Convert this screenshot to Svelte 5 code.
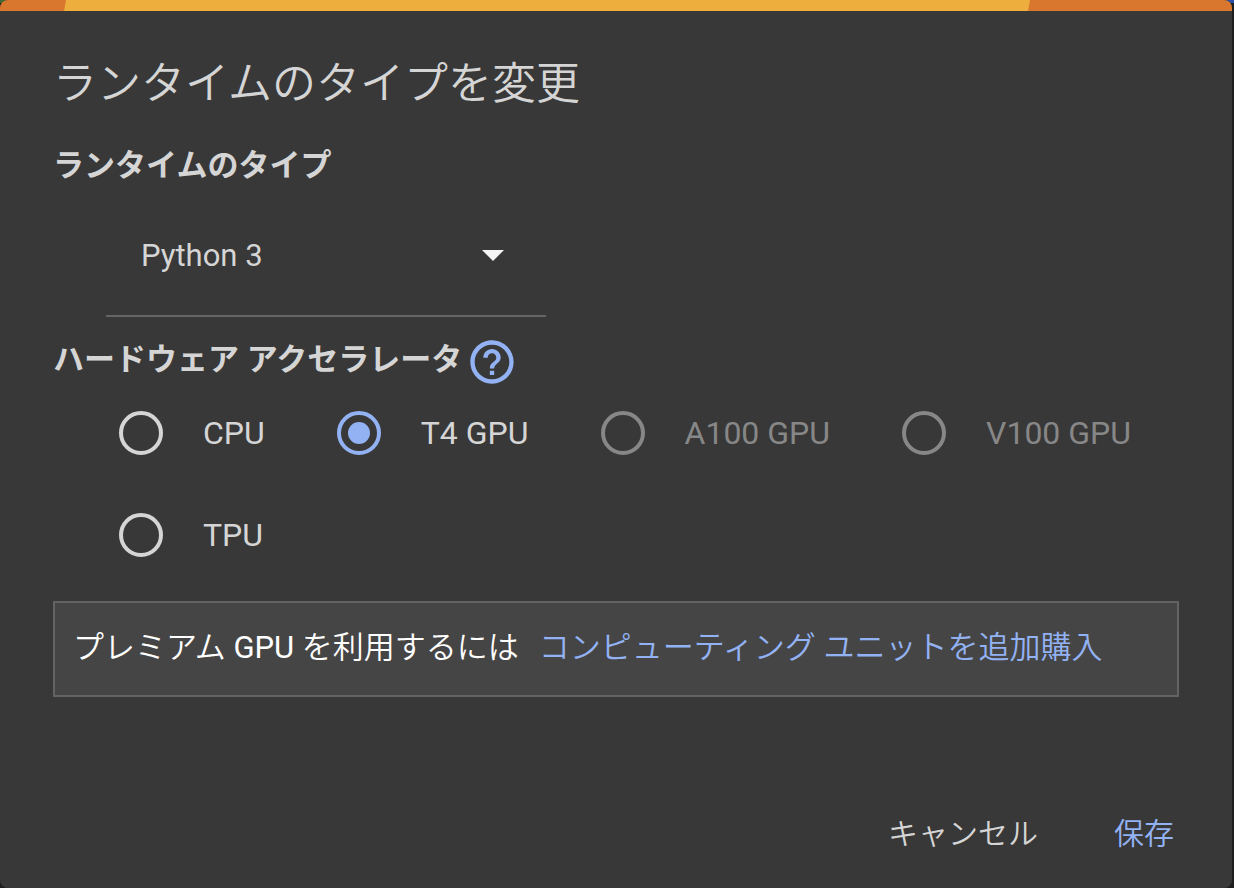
<script lang="ts">
  type Accelerator = { value: string; label: string; disabled?: boolean }

  const accelerators: Accelerator[] = [
    { value: 'cpu', label: 'CPU' },
    { value: 't4', label: 'T4 GPU' },
    { value: 'a100', label: 'A100 GPU', disabled: true },
    { value: 'v100', label: 'V100 GPU', disabled: true },
    { value: 'tpu', label: 'TPU' },
  ]

  let runtime = $state('python3')
  let accelerator = $state('t4')
</script>

<div class="backdrop">
  <form class="dialog" aria-labelledby="dialog-title" onsubmit={(e) => e.preventDefault()}>
    <div class="stripe"><div class="stripe-inner"></div></div>
    <div class="body">
      <h2 id="dialog-title">ランタイムのタイプを変更</h2>

      <label class="section-title" for="runtime">ランタイムのタイプ</label>
      <div class="select-wrapper">
        <select id="runtime" bind:value={runtime}>
          <option value="python3">Python 3</option>
          <option value="r">R</option>
        </select>
        <svg class="arrow" viewBox="0 0 22 11" aria-hidden="true">
          <path d="M0 0h22L11 11z" />
        </svg>
      </div>

      <div class="section-row">
        <span class="section-title" id="accelerator-title">ハードウェア アクセラレータ</span>
        <a class="help" href="#help" aria-label="ヘルプ">
          <svg viewBox="0 0 24 24" aria-hidden="true">
            <path
              d="M11 18h2v-2h-2v2zm1-16C6.48 2 2 6.48 2 12s4.48 10 10 10 10-4.48 10-10S17.52 2 12 2zm0 18c-4.41 0-8-3.59-8-8s3.59-8 8-8 8 3.59 8 8-3.59 8-8 8zm0-14c-2.21 0-4 1.79-4 4h2c0-1.1.9-2 2-2s2 .9 2 2c0 2-3 1.75-3 5h2c0-2.25 3-2.5 3-5 0-2.21-1.79-4-4-4z"
            />
          </svg>
        </a>
      </div>

      <div class="radios" role="radiogroup" aria-labelledby="accelerator-title">
        {#each accelerators as item (item.value)}
          <label class="radio" class:disabled={item.disabled}>
            <input
              type="radio"
              name="accelerator"
              value={item.value}
              disabled={item.disabled}
              bind:group={accelerator}
            />
            {item.label}
          </label>
        {/each}
      </div>

      <div class="notice">
        <span>プレミアム <span class="latin">GPU</span> を利用するには</span>
        <a href="#purchase">コンピューティング ユニットを追加購入</a>
      </div>

      <div class="actions">
        <button type="button">キャンセル</button>
        <button type="submit" class="primary">保存</button>
      </div>
    </div>
  </form>
</div>

<style>
  :global(body) {
    background: #1e1e1e;
  }

  .backdrop {
    min-height: 100vh;
    display: flex;
    padding-right: 2px;
    box-sizing: border-box;
    background: linear-gradient(90deg, #3d6b35 50%, #2a4fa5 50%) top / 100% 3px no-repeat;
    font-family: Roboto, 'Noto Sans CJK JP', sans-serif;
    font-size: 31px;
    line-height: 40px;
    color: #d5d5d5;
  }

  .dialog {
    flex: 1;
    display: flex;
    flex-direction: column;
    background: #383838;
    border-radius: 8px;
    overflow: hidden;
  }

  .stripe {
    height: 11px;
    padding: 0 202px 0 64px;
    background: #d9772e;
  }
  .stripe-inner {
    height: 100%;
    background: #eeae3d;
    clip-path: polygon(2px 0, 100% 0, calc(100% - 2px) 100%, 0 100%);
  }

  .body {
    flex: 1;
    display: flex;
    flex-direction: column;
    padding: 41px 53px 34px;
  }

  h2 {
    margin: 0;
    font-size: 44px;
    font-weight: 350;
    line-height: 64px;
  }

  .section-title {
    font-weight: 700;
  }
  label.section-title {
    margin-top: 30px;
  }

  .select-wrapper {
    width: 440px;
    margin: 9px 0 0 53px;
    display: grid;
    align-items: center;
    border-bottom: 2px solid #656565;
  }
  .select-wrapper > * {
    grid-area: 1 / 1;
  }
  select {
    appearance: none;
    height: 120px;
    padding: 2px 72px 0 35px;
    border: 0;
    background: transparent;
    color: inherit;
    font: inherit;
  }
  .arrow {
    justify-self: end;
    width: 22px;
    height: 11px;
    margin-right: 42px;
    fill: #f5f5f5;
    pointer-events: none;
  }

  .section-row {
    display: flex;
    align-items: center;
    gap: 4px;
    margin-top: 19px;
  }
  .section-row .section-title {
    padding-bottom: 4px;
  }
  .help {
    display: flex;
  }
  .help svg {
    width: 52px;
    height: 52px;
    fill: #93b2f3;
  }

  .radios {
    display: flex;
    flex-wrap: wrap;
    gap: 12px 72px;
    padding-left: 66px;
    font-size: 32px;
  }
  .radio {
    display: flex;
    align-items: center;
    gap: 40px;
    height: 90px;
  }
  .radio input {
    appearance: none;
    display: grid;
    place-items: center;
    width: 44px;
    height: 44px;
    margin: 0;
    border: 4px solid #d5d5d5;
    border-radius: 50%;
  }
  .radio input:checked {
    border-color: #93b2f3;
  }
  .radio input:checked::before {
    content: '';
    width: 22px;
    height: 22px;
    border-radius: 50%;
    background: #93b2f3;
  }
  .radio.disabled {
    color: #878787;
  }
  .radio.disabled input {
    border-color: #878787;
  }

  .notice {
    display: flex;
    flex-wrap: wrap;
    column-gap: 20px;
    margin-top: 21px;
    padding: 25px 18px 27px;
    border: 2px solid #636363;
    background: #454545;
    color: #fff;
    font-weight: 350;
  }
  .latin {
    font-weight: 400;
  }
  a {
    color: #93b2f3;
    text-decoration: none;
  }

  .actions {
    display: flex;
    justify-content: flex-end;
    gap: 76px;
    margin-top: auto;
    padding-right: 5px;
    font-size: 30px;
    font-weight: 350;
  }
  button {
    padding: 0;
    border: 0;
    background: none;
    color: inherit;
    font: inherit;
    cursor: pointer;
  }
  .primary {
    color: #93b2f3;
  }
</style>
